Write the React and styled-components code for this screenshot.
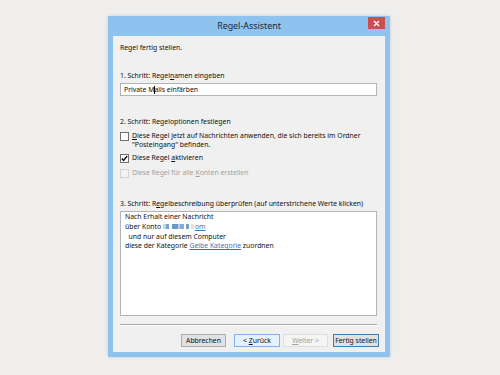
import React from "react";
import styled, { createGlobalStyle } from "styled-components";

const Global = createGlobalStyle`
  html, body { margin: 0; padding: 0; background: #efeeec; }
  body { font-family: "Noto Sans", "Segoe UI", sans-serif; color: #111; }
`;

const Page = styled.div`
  width: 500px;
  height: 375px;
  padding: 16px 0 0 108px;
  box-sizing: border-box;
`;

const Window = styled.div`
  width: 282px;
  height: 341px;
  box-sizing: border-box;
  background: #8fc3ef;
  padding: 0 5px 5px 5px;
  display: flex;
  flex-direction: column;
  box-shadow: 0 0 3px rgba(120, 150, 180, 0.35);
`;

const TitleBar = styled.div`
  height: 20px;
  flex: none;
  display: grid;
  grid-template-columns: 1fr auto 1fr;
  align-items: start;
`;

const Title = styled.div`
  grid-column: 2;
  font-size: 8.9px;
  line-height: 20px;
  color: #1a2735;
`;

const Close = styled.div`
  grid-column: 3;
  justify-self: end;
  margin-top: 1px;
  width: 17px;
  height: 12px;
  background: #c75050;
  display: flex;
  align-items: center;
  justify-content: center;
`;

const Body = styled.div`
  flex: 1;
  min-height: 0;
  overflow: hidden;
  background: #f0f0f0;
  padding: 6px 8px 0 7px;
  font-size: 6.85px;
  white-space: nowrap;
  display: flex;
  flex-direction: column;
`;

const Label = styled.div`
  flex: none;
  line-height: 11px;
  margin-top: ${(p) => p.mt || 0}px;
`;

const Input = styled.div`
  flex: none;
  margin-top: 2px;
  height: 13px;
  box-sizing: border-box;
  border: 1px solid #b4b4b4;
  background: #fff;
  padding: 0 3px;
  display: flex;
  align-items: center;
`;

const Caret = styled.span`
  display: inline-block;
  width: 1px;
  height: 8px;
  background: #000;
  margin: 0 -0.5px;
  vertical-align: middle;
`;

const CheckRow = styled.div`
  flex: none;
  display: flex;
  align-items: flex-start;
  gap: 3px;
  margin-top: ${(p) => p.mt || 0}px;
  color: ${(p) => (p.disabled ? "#a2a2a2" : "#111")};
`;

const Box = styled.div`
  flex: none;
  width: 9px;
  height: 9px;
  box-sizing: border-box;
  border: 1px solid ${(p) => (p.disabled ? "#d2d2d2" : "#707070")};
  background: ${(p) => (p.disabled ? "#f2f2f2" : "#fff")};
  margin-top: 1px;
  display: flex;
  align-items: center;
  justify-content: center;
`;

const CheckText = styled.div`
  line-height: 8.5px;
  padding-top: 1px;
`;

const U = styled.span`
  text-decoration: underline;
  text-underline-offset: 1px;
`;

const Desc = styled.div`
  flex: none;
  margin-top: 2.5px;
  height: 105px;
  box-sizing: border-box;
  border: 1px solid #b4b4b4;
  background: #fff;
  padding: 0 4px;
  line-height: 9.8px;
`;

const Link = styled.span`
  color: #3a74b8;
  text-decoration: underline;
  text-underline-offset: 1px;
`;

const Blur = styled.span`
  display: inline-block;
  width: ${(p) => p.w}px;
  height: 5px;
  background: ${(p) => p.c};
  margin-right: ${(p) => p.mr ?? 1}px;
  vertical-align: middle;
  filter: blur(0.6px);
  opacity: 0.85;
`;

const Separator = styled.div`
  flex: none;
  margin-top: 8px;
  height: 1px;
  background: #a8a8a8;
  border-bottom: 1px solid #fff;
`;

const Buttons = styled.div`
  flex: none;
  margin-top: 8px;
  margin-right: -2px;
  display: flex;
  justify-content: flex-end;
`;

const Button = styled.div`
  width: ${(p) => p.w || 46}px;
  height: 13px;
  box-sizing: border-box;
  border: 1px solid
    ${(p) =>
      p.variant === "hot"
        ? "#7eb4ea"
        : p.variant === "default"
        ? "#3c7fb1"
        : p.variant === "disabled"
        ? "#dedede"
        : "#adadad"};
  background: ${(p) =>
    p.variant === "hot" ? "#e5f1fb" : p.variant === "disabled" ? "#f4f4f4" : "#e1e1e1"};
  color: ${(p) => (p.variant === "disabled" ? "#a0a0a0" : "#111")};
  font-size: 6.85px;
  display: flex;
  align-items: center;
  justify-content: center;
  margin-left: ${(p) => p.ml || 0}px;
`;

export default function App() {
  return (
    <>
      <Global />
      <Page>
        <Window>
          <TitleBar>
            <Title>Regel-Assistent</Title>
            <Close>
              <svg width="7" height="7" viewBox="0 0 7 7">
                <path d="M1 1L6 6M6 1L1 6" stroke="#fff" strokeWidth="1.3" />
              </svg>
            </Close>
          </TitleBar>
          <Body>
            <Label>Regel fertig stellen.</Label>
            <Label mt={17}>
              1. Schritt: Regel<U>n</U>amen eingeben
            </Label>
            <Input>
              <span>
                Private M<Caret />ails einfärben
              </span>
            </Input>
            <Label mt={20}>2. Schritt: Regeloptionen festlegen</Label>
            <CheckRow mt={4}>
              <Box />
              <CheckText>
                <U>D</U>iese Regel jetzt auf Nachrichten anwenden, die sich bereits im Ordner
                <br />
                "Posteingang" befinden.
              </CheckText>
            </CheckRow>
            <CheckRow mt={4}>
              <Box>
                <svg width="7" height="7" viewBox="0 0 7 7">
                  <path d="M0.8 3.6L2.6 5.5L6.2 1" stroke="#111" strokeWidth="1.4" fill="none" />
                </svg>
              </Box>
              <CheckText>
                Diese Regel <U>a</U>ktivieren
              </CheckText>
            </CheckRow>
            <CheckRow mt={5} disabled>
              <Box disabled />
              <CheckText>
                Diese Regel für alle <U>K</U>onten erstellen
              </CheckText>
            </CheckRow>
            <Label mt={19.5}>
              3. Schritt: R<U>e</U>gelbeschreibung überprüfen (auf unterstrichene Werte klicken)
            </Label>
            <Desc>
              <div>Nach Erhalt einer Nachricht</div>
              <div>
                über Konto{" "}
                <Blur w={3} c="#b5d2ea" mr={0} />
                <Blur w={3} c="#5f94c9" mr={3} />
                <Blur w={6} c="#4f86c2" mr={0} />
                <Blur w={2} c="#a9c6e2" mr={0} />
                <Blur w={4} c="#6f9fcf" mr={2} />
                <Blur w={3} c="#5d8fc7" mr={2} />
                <Blur w={3} c="#d2e0ee" mr={1} />
                <Link>om</Link>
              </div>
              <div>&nbsp; und nur auf diesem Computer</div>
              <div>
                diese der Kategorie <Link>Gelbe Kategorie</Link> zuordnen
              </div>
            </Desc>
            <Separator />
            <Buttons>
              <Button w={45}>
                <span>Abbrechen</span>
              </Button>
              <Button variant="hot" ml={8}>
                <span>
                  &lt; <U>Z</U>urück
                </span>
              </Button>
              <Button variant="disabled" w={45} ml={3}>
                <span>
                  <U>W</U>eiter &gt;
                </span>
              </Button>
              <Button variant="default" ml={5}>
                <span>Fertig stellen</span>
              </Button>
            </Buttons>
          </Body>
        </Window>
      </Page>
    </>
  );
}
